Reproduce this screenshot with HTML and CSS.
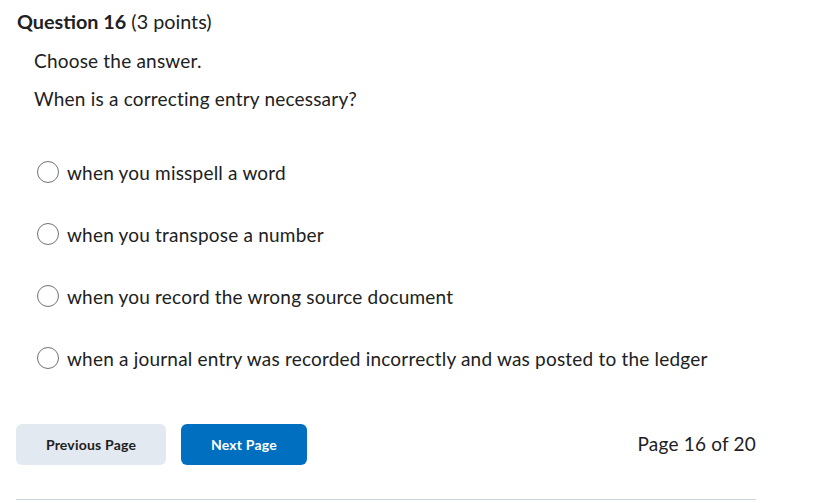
FILE: index.html
```html
<!DOCTYPE html>
<html lang="en">
<head>
    <meta charset="UTF-8">
    <title>Question 16</title>
    <link rel="stylesheet" href="styles.css">
</head>
<body>
    <div class="question">
        <h2 class="q-title"><strong>Question 16</strong> (3 points)</h2>
        <div class="q-body">
            <p>Choose the answer.</p>
            <p>When is a correcting entry necessary?</p>
        </div>
        <div class="choices">
            <label class="choice"><span class="radio"></span>when you misspell a word</label>
            <label class="choice"><span class="radio"></span>when you transpose a number</label>
            <label class="choice"><span class="radio"></span>when you record the wrong source document</label>
            <label class="choice"><span class="radio"></span>when a journal entry was recorded incorrectly and was posted to the ledger</label>
        </div>
    </div>

    <div class="pager">
        <button class="btn btn-prev">Previous Page</button>
        <button class="btn btn-next">Next Page</button>
        <span class="page-count">Page 16 of 20</span>
    </div>
    <div class="divider"></div>
</body>
</html>
```

FILE: styles.css
```css
body {
    margin: 0;
    padding: 0 79px 0 10px;
    font-family: Lato, "Open Sans", sans-serif;
    color: #202122;
    background: #fff;
}

.q-title {
    margin: 0;
    padding: 9px 0 0 7px;
    font-size: 19.8px;
    font-weight: normal;
    line-height: 24px;
}

.q-title strong {
    font-weight: 700;
}

.q-body {
    padding: 15px 0 0 24px;
}

.q-body p {
    margin: 0 0 13px;
    font-size: 19px;
    letter-spacing: 0.2px;
    line-height: 25px;
}

.choices {
    padding: 35px 0 0 27px;
}

.choice {
    display: flex;
    align-items: center;
    height: 26px;
    margin-bottom: 36px;
    font-size: 19px;
    letter-spacing: 0.2px;
}

.radio {
    width: 20px;
    height: 20px;
    border: 1px solid #6e7477;
    border-radius: 50%;
    margin-right: 8px;
    box-sizing: content-box;
}

.pager {
    display: flex;
    align-items: center;
    padding: 17px 0 0 6px;
}

.btn {
    height: 41px;
    border: none;
    border-radius: 6px;
    font-family: Lato, sans-serif;
    font-size: 14px;
    font-weight: 700;
    letter-spacing: 0.2px;
    cursor: pointer;
}

.btn-prev {
    width: 150px;
    background: #e3e9f1;
    color: #202122;
    margin-right: 15px;
}

.btn-next {
    width: 126px;
    background: #006fbf;
    color: #fff;
}

.page-count {
    margin-left: auto;
    margin-bottom: 3px;
    font-size: 19px;
    letter-spacing: 0.2px;
}

.divider {
    margin: 34px 0 0 6px;
    height: 1px;
    background: #cdd5dc;
}
```
